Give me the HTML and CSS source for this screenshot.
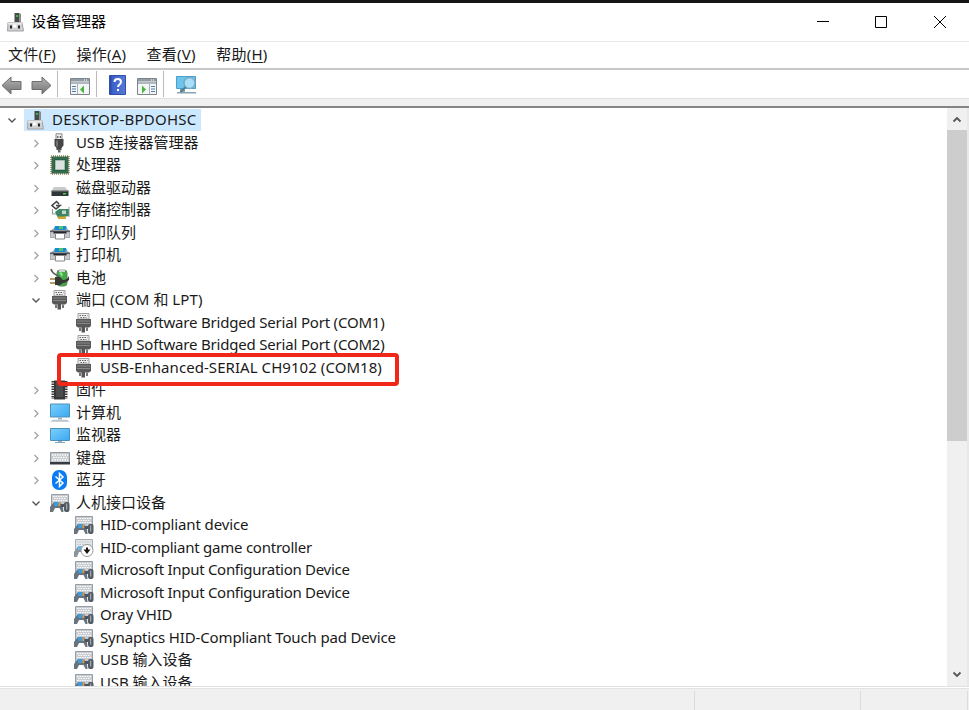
FILE: index.html
```html
<!DOCTYPE html>
<html lang="zh-CN">
<head>
<meta charset="utf-8">
<title>设备管理器</title>
<link rel="stylesheet" href="styles.css">
</head>
<body>
<svg class="defs" width="0" height="0">
  <defs>
    <linearGradient id="blue" x1="0" y1="0" x2="1" y2="1"><stop offset="0" stop-color="#7bd0fb"/><stop offset="1" stop-color="#3aa8f2"/></linearGradient>
    <linearGradient id="grey" x1="0" y1="0" x2="0" y2="1"><stop offset="0" stop-color="#b4b4b4"/><stop offset="1" stop-color="#747474"/></linearGradient>
    <linearGradient id="help" x1="0" y1="0" x2="1" y2="0"><stop offset="0" stop-color="#2442a0"/><stop offset=".2" stop-color="#3d62cb"/><stop offset="1" stop-color="#5778d8"/></linearGradient>
    <symbol id="pc" viewBox="0 0 20 20"><path d="M8.500 1h5v11h-5z" fill="#454b4b"/><path d="M13.500 1l1.500 1v10h-1.500z" fill="#888"/><path d="M10 3h2v2h-2z" fill="#42b548"/><path d="M2 10.500h14l1.500 8.500H1.500z" fill="#cfd0d2" stroke="#a2a3a5"/><path d="M2 10.500h14v2H2z" fill="#e9e9e9"/><path d="M4 13.500h2v3H4zm8 0h2v3h-2z" fill="#25282b"/><path d="M7 12.500h3.500v3H7z" fill="#fff"/></symbol>
    <symbol id="usb" viewBox="0 0 20 20"><path d="M6 .8h6v6H6z" fill="#eee" stroke="#888"/><path d="M7.200 3h1.200v2H7.200zm2.600 0H11v2H9.800z" fill="#555"/><path d="M4.500 6h9v6.500L11.500 15v2h-5v-2l-2-2.500z" fill="#464646"/><path d="M6 7.500h2v6H6z" fill="#727272"/><path d="M8 16h2.500v3.500H8z" fill="#666"/></symbol>
    <symbol id="cpu" viewBox="0 0 20 20"><path d="M1 1h18v18H1z" fill="none" stroke="#9b8446" stroke-width="1.500" stroke-dasharray="1 1"/><path d="M1.500 1.500h17v17h-17z" fill="#286047"/><path d="M3 3h14v14H3z" fill="none" stroke="#46765a"/><path d="M5.500 5.500h9v9h-9z" fill="#dce2df" stroke="#a9bdb1"/></symbol>
    <symbol id="disk" viewBox="0 0 20 20"><path d="M4 9h11l3.500 4h-17z" fill="#c9caca"/><path d="M1.500 12.800h17V18h-17z" fill="#303535"/><path d="M1.500 13h17" stroke="#727878"/><path d="M13 15h3v1.500h-3z" fill="#43d057"/></symbol>
    <symbol id="storage" viewBox="0 0 20 20"><path d="M9 4 6.500 1.500 2 5.500 6 9l4-3.500H6" fill="none" stroke="#454545" stroke-width="1.600"/><path d="M2.500 9v5h6" fill="none" stroke="#999" stroke-width="1.200"/><path d="M5 12l4-3h10v7l-11 2z" fill="#3c8665"/><path d="M12 10.500h4v3.500h-4z" fill="#c5d7cd"/><path d="M8 16.500h8V19H8z" fill="#d4a52f"/><path d="M19 7v10" stroke="#8c9991"/></symbol>
    <symbol id="printer" viewBox="0 0 20 20"><path d="M5 3h11l1.500 4h-14z" fill="#188bd5"/><path d="M9 3h4v3H9z" fill="#50c66a"/><path d="M3 5.500h1.500v2h11v-2H17l3 3V15H0V8.500z" fill="#a7acb0"/><path d="M0 7.500h20v1.500H0z" fill="#555d63"/><path d="M1 9.500h18V14H1z" fill="#c4c8cb"/><path d="M3.500 8.500h13v2h-13z" fill="#24282c"/><path d="M5.500 10.500h9v5.500h-9z" fill="#fff" stroke="#888"/></symbol>
    <symbol id="battery" viewBox="0 0 20 20"><rect x="7" y="2" width="10" height="16" rx="3" fill="#43aa48" stroke="#5d8560"/><path d="M9 1h6v3H9z" fill="#ccd1cd"/><path d="M9 5c2-2 5 0 3 4" fill="#8fe18b"/><path d="M1 1c1 5 5 5 8 8" fill="none" stroke="#5a5a5a" stroke-width="1.500"/><path d="M5 9h5l3 3c3 0 5-2 6-4v4c-2 2-4 3-6 3l-3 2H5z" fill="#353a35"/><path d="M0 11h5M0 15h5" stroke="#9b8033" stroke-width="1.600"/></symbol>
    <symbol id="port" viewBox="0 0 20 20"><path d="M4 .500h11V6H4z" fill="#f0f0f0" stroke="#a0a0a0"/><path d="M5.500 2.500h8M6.500 4.500h6" stroke="#626262" stroke-dasharray="1.500 1"/><path d="M2 6h15v7l-2 1.500H4L2 13z" fill="#595959"/><path d="M3 8h13M3 10.500h13" stroke="#888"/><path d="M5 14.500h2V18H5zm7 0h2V18h-2z" fill="#777"/><path d="M7.500 14h3.500v5.500H7.500z" fill="#565656"/></symbol>
    <symbol id="firmware" viewBox="0 0 20 20"><path d="M3 1v18M16 1v18" stroke="#383838" stroke-width="3" stroke-dasharray="1.500 1"/><path d="M4 .500h11v19H4z" fill="#383838"/><path d="M6 2h7v15H6z" fill="#4c4c4c"/></symbol>
    <symbol id="computer" viewBox="0 0 20 20"><path d="M.500 1h19v13H.500z" fill="url(#blue)" stroke="#4c91ba"/><path d="M8 14.500h4v2H8z" fill="#9eb0bb"/><path d="M3 16.800h14l3 2H0z" fill="#b9c6ce"/></symbol>
    <symbol id="monitor" viewBox="0 0 20 20"><path d="M.500 3.500h19v12H.500z" fill="url(#blue)" stroke="#4c91ba"/><path d="M8 16h4v1H8z" fill="#aab"/><path d="M5 17.500h10" stroke="#84a8b8"/></symbol>
    <symbol id="keyboard" viewBox="0 0 20 20"><path d="M.500 4.500h19v11H.500z" fill="#c3c9cc" stroke="#92999f"/><path d="M2 7h16M3 9.500h14M2 12h16" stroke="#fff" stroke-width="1.300" stroke-dasharray="1.500 1"/><path d="M0 14h20v2.500H0z" fill="#353b40"/></symbol>
    <symbol id="bluetooth" viewBox="0 0 20 20"><rect x="2" y="0" width="15" height="20" rx="7" fill="#087cf0"/><path d="M5.500 6.500 13 13l-3.500 3.500v-13L13 7l-7.500 6.500" fill="none" stroke="#fff" stroke-width="1.500"/></symbol>
    <symbol id="hid" viewBox="0 0 20 20"><path d="M1.500 1.500h17V13h-17z" fill="#c8ccd0" stroke="#989ea5"/><path d="M3 3.500h14M4 5.500h12M3 7.500h14" stroke="#fff" stroke-dasharray="1.500 1"/><path d="M0 13.500h20V20H0z" fill="#fff"/><path d="M3.500 9.500h7l2.500 4 .5 5.500h-2L9.500 15H5l-2 4H0v-5z" fill="#68737e"/><path d="M4 9h4.500v4H4z" fill="#3d9bda"/><path d="M8.500 10h2v3h-2z" fill="#e49b48"/><path d="M10.500 11h4v3h-4z" fill="#4c5660"/><rect x="14" y="9" width="5.500" height="10" rx="2" fill="#525c66"/><path d="M16.700 10.500v6" stroke="#b7bcc1"/></symbol>
    <symbol id="game" viewBox="0 0 20 20"><path d="M1.500 1.500h17V13h-17z" fill="#e3e6e8" stroke="#a7adb2"/><path d="M3 4h14M3 6.500h14" stroke="#c0c5c9" stroke-dasharray="1.500 1"/><path d="M3.500 9h6v5H5l-2 5H0v-5z" fill="#8b959d"/><path d="M4 8h4v4H4z" fill="#68b7e8"/><circle cx="13" cy="12.500" r="6" fill="#fff" stroke="#999"/><path d="M12 9.500h2v2h2.500L13 16l-3.500-4.500H12z" fill="#161616"/></symbol>
    <symbol id="down" viewBox="0 0 10 10"><path d="m1.500 3.500 3.500 3.500L8.500 3.500" fill="none" stroke="#555" stroke-width="1.400"/></symbol>
    <symbol id="right" viewBox="0 0 10 10"><path d="m3.500 2 3.500 3.500L3.500 9" fill="none" stroke="#a2a2a2" stroke-width="1.300"/></symbol>
    <symbol id="arrow" viewBox="0 0 22 20"><path d="M1 9.500 10 1v4.500h10v8H10V18z" fill="url(#grey)" stroke="#6e6e6e"/></symbol>
    <symbol id="panel" viewBox="0 0 20 17"><path d="M.500.500h19v16H.500z" fill="#f4f5f6" stroke="#7d858c"/><path d="M1 1h18v2.500H1z" fill="#929ba3"/><path d="M14 2h4" stroke="#fff" stroke-dasharray="1 1"/><path d="M1 5h18" stroke="#b2b9be" stroke-width="2"/></symbol>
  </defs>
</svg>
<main class="window">
  <header class="title">
    <svg class="icon"><use href="#pc"/></svg><h1>设备管理器</h1>
    <div class="controls">
      <svg width="12" height="12" viewBox="0 0 12 12"><path d="M0 5.500h12"/></svg>
      <svg width="12" height="12" viewBox="0 0 12 12"><path d="M.5.500h11v11H.5z"/></svg>
      <svg width="12" height="12" viewBox="0 0 12 12"><path d="m0 0 12 12M12 0 0 12"/></svg>
    </div>
  </header>
  <nav class="menu"><span>文件(<u>F</u>)</span><span>操作(<u>A</u>)</span><span>查看(<u>V</u>)</span><span>帮助(<u>H</u>)</span></nav>
  <div class="toolbar">
    <svg class="arrow" width="22" height="20"><use href="#arrow"/></svg>
    <svg class="arrow forward" width="22" height="20"><use href="#arrow"/></svg>
    <i class="sep first"></i>
    <svg class="panel p1" width="20" height="17" viewBox="0 0 20 17"><use href="#panel"/><path d="M7.500 6v10" stroke="#aab1b7"/><path d="M2 8.500h4M2 11h4M2 13.500h4" stroke="#4b7fae"/><path d="m14 7.500-4 4 4 4z" fill="#4bb53e"/></svg>
    <i class="sep second"></i>
    <svg class="help" width="17" height="21" viewBox="0 0 17 21"><path d="M.5.500h16v19H.5z" fill="url(#help)" stroke="#2f4fa8"/><path d="M5.500 7c0-4 6.500-4 6.500 0 0 2.500-3 2.500-3 5" fill="none" stroke="#fff" stroke-width="2"/><path d="M8 14h2v2H8z" fill="#fff"/></svg>
    <svg class="panel p2" width="20" height="17" viewBox="0 0 20 17"><use href="#panel"/><path d="M12.500 6v10" stroke="#aab1b7"/><path d="M14 8.500h4M14 11h4M14 13.500h4" stroke="#4b7fae"/><path d="m5 7.500 4 4-4 4z" fill="#4bb53e"/></svg>
    <i class="sep third"></i>
    <svg class="scan" width="21" height="20" viewBox="0 0 21 20"><path d="M.5 1.500h19v12H.5z" fill="#6bc5ef" stroke="#4b9fc8"/><path d="M4 14h5v3h11v1.500H1V17h3z" fill="#86a5b4"/><circle cx="13.500" cy="8" r="5.500" fill="#a7dff8" stroke="#78aabe" stroke-width="1.400"/><path d="m9.500 12-5 5" stroke="#527e94" stroke-width="2.200"/></svg>
  </div>
  <div class="gap"></div>
  <section class="content">
    <div class="tree">
      <div class="row root"><svg class="chev"><use href="#down"/></svg><div class="selected"><svg class="icon"><use href="#pc"/></svg><b class="host">DESKTOP-BPDOHSC</b></div></div>
      <div class="row group"><svg class="chev"><use href="#right"/></svg><svg class="icon"><use href="#usb"/></svg><p><b class="usb">USB</b> 连接器管理器</p></div>
      <div class="row group"><svg class="chev"><use href="#right"/></svg><svg class="icon"><use href="#cpu"/></svg><p>处理器</p></div>
      <div class="row group"><svg class="chev"><use href="#right"/></svg><svg class="icon"><use href="#disk"/></svg><p>磁盘驱动器</p></div>
      <div class="row group"><svg class="chev"><use href="#right"/></svg><svg class="icon"><use href="#storage"/></svg><p>存储控制器</p></div>
      <div class="row group"><svg class="chev"><use href="#right"/></svg><svg class="icon"><use href="#printer"/></svg><p>打印队列</p></div>
      <div class="row group"><svg class="chev"><use href="#right"/></svg><svg class="icon"><use href="#printer"/></svg><p>打印机</p></div>
      <div class="row group"><svg class="chev"><use href="#right"/></svg><svg class="icon"><use href="#battery"/></svg><p>电池</p></div>
      <div class="row group"><svg class="chev"><use href="#down"/></svg><svg class="icon"><use href="#port"/></svg><p>端口 <b class="com">(COM</b> 和 <b class="com">LPT)</b></p></div>
      <div class="row device"><svg class="icon"><use href="#port"/></svg><p><b class="hhd">HHD Software Bridged Serial Port (COM1)</b></p></div>
      <div class="row device"><svg class="icon"><use href="#port"/></svg><p><b class="hhd">HHD Software Bridged Serial Port (COM2)</b></p></div>
      <div class="row device"><svg class="icon"><use href="#port"/></svg><p><b class="serial">USB-Enhanced-SERIAL CH9102 (COM18)</b></p></div>
      <div class="row group"><svg class="chev"><use href="#right"/></svg><svg class="icon"><use href="#firmware"/></svg><p>固件</p></div>
      <div class="row group"><svg class="chev"><use href="#right"/></svg><svg class="icon"><use href="#computer"/></svg><p>计算机</p></div>
      <div class="row group"><svg class="chev"><use href="#right"/></svg><svg class="icon"><use href="#monitor"/></svg><p>监视器</p></div>
      <div class="row group"><svg class="chev"><use href="#right"/></svg><svg class="icon"><use href="#keyboard"/></svg><p>键盘</p></div>
      <div class="row group"><svg class="chev"><use href="#right"/></svg><svg class="icon"><use href="#bluetooth"/></svg><p>蓝牙</p></div>
      <div class="row group"><svg class="chev"><use href="#down"/></svg><svg class="icon"><use href="#hid"/></svg><p>人机接口设备</p></div>
      <div class="row device"><svg class="icon"><use href="#hid"/></svg><p><b class="hd">HID-compliant device</b></p></div>
      <div class="row device"><svg class="icon"><use href="#game"/></svg><p><b class="gc">HID-compliant game controller</b></p></div>
      <div class="row device"><svg class="icon"><use href="#hid"/></svg><p><b class="ms">Microsoft Input Configuration Device</b></p></div>
      <div class="row device"><svg class="icon"><use href="#hid"/></svg><p><b class="ms">Microsoft Input Configuration Device</b></p></div>
      <div class="row device"><svg class="icon"><use href="#hid"/></svg><p><b class="oray">Oray VHID</b></p></div>
      <div class="row device"><svg class="icon"><use href="#hid"/></svg><p><b class="syn">Synaptics HID-Compliant Touch pad Device</b></p></div>
      <div class="row device"><svg class="icon"><use href="#hid"/></svg><p><b class="usb">USB</b> 输入设备</p></div>
      <div class="row device"><svg class="icon"><use href="#hid"/></svg><p><b class="usb">USB</b> 输入设备</p></div>
      <div class="callout"></div>
    </div>
    <div class="scroll">
      <svg width="10" height="10" viewBox="0 0 10 10"><path d="M1.500 7.500 5 4l3.500 3.500"/></svg>
      <div class="thumb"></div>
      <svg width="10" height="10" viewBox="0 0 10 10"><path d="M1.500 2.500 5 6l3.500-3.500"/></svg>
    </div>
  </section>
  <footer class="status"><div></div><div></div><div></div></footer>
</main>
</body>
</html>
```
FILE: styles.css
```css
* { box-sizing: border-box; }
body { margin: 0; overflow: hidden; background: #fff; color: #1a1a1a; font: 15px/22px "Noto Sans", "Noto Sans CJK SC", sans-serif; }
.defs { position: absolute; }
.window { display: flex; flex-direction: column; height: 710px; border-top: 3px solid #151515; }
.title { display: flex; align-items: center; height: 39px; flex: none; padding-left: 6px; border-bottom: 1px solid #e8e8e8; }
h1 { margin: 0 0 2px 5px; font-size: 15px; font-weight: 400; color: #000; font-family: "Noto Sans CJK SC", sans-serif; }
.title .icon { margin-bottom: 1px; }
.icon { width: 20px; height: 20px; flex: none; }
.controls { display: flex; gap: 47px; margin-left: auto; padding-right: 23px; }
.controls svg:first-child { margin-right: -1px; }
.controls path { fill: none; stroke: #000; stroke-width: 1; }
.menu { display: flex; gap: 20.3px; height: 28px; flex: none; align-items: center; padding: 0 0 2px 8px; border-bottom: 2px solid #c8c8c8; letter-spacing: .25px; }
.menu u { text-underline-offset: 2px; text-decoration-thickness: 1px; }
.toolbar { display: flex; align-items: center; height: 28px; flex: none; padding-left: 1px; }
.toolbar svg { flex: none; }
.toolbar .arrow { margin-top: 3px; }
.forward { transform: scaleX(-1); margin-left: 7px; }
.sep { width: 1px; height: 26px; background: #bbb; }
.first { margin-left: 5px; }
.p1 { margin-left: 12px; }
.second { margin-left: 6px; }
.toolbar .help { margin: 2px 0 0 12px; }
.p2 { margin-left: 11px; }
.third { margin-left: 6px; }
.toolbar .scan { margin: 2px 0 0 12px; }
.panel { margin-top: 5px; }
.gap { height: 10px; flex: none; background: #f0f0f0; border-top: 1px solid #e0e0e0; border-bottom: 2px solid #858585; }
.content { display: flex; height: 578px; flex: none; }
.tree { position: relative; width: 947px; height: 578px; padding-top: .75px; overflow: hidden; }
.row { display: flex; align-items: center; height: 22.5px; white-space: nowrap; }
.row p { margin: 0 0 1.2px 6px; }
.row b { font-weight: 400; display: inline-block; letter-spacing: -.42px; }
.row .usb { letter-spacing: -.1px; }
.row .com { letter-spacing: .15px; }
.row .hhd { letter-spacing: -.19px; }
.row .serial { letter-spacing: .06px; }
.row .hd { letter-spacing: -.12px; }
.row .gc { letter-spacing: -.23px; }
.row .ms { letter-spacing: -.29px; }
.row .oray { letter-spacing: -.15px; }
.row .syn { letter-spacing: -.15px; }
.chev { width: 10px; height: 10px; flex: none; }
.root { padding-left: 7px; }
.selected { display: flex; align-items: center; width: 177px; height: 22px; margin-left: 7px; padding-left: 2px; background: #cce8ff; }
.selected .host { margin: 0 0 2px 6px; letter-spacing: .25px; }
.group { padding-left: 31px; }
.group .icon { margin-left: 9px; }
.device { padding-left: 74px; }
.callout { position: absolute; left: 57px; top: 245px; width: 342px; height: 33px; border: 4px solid #f12719; border-radius: 4px; }
.scroll { display: flex; flex-direction: column; align-items: center; width: 22px; background: #f0f0f0; border-right: 2px solid #e8e8e8; }
.scroll svg { margin: 6px 0; flex: none; }
.scroll path { fill: none; stroke: #555; stroke-width: 1.8; }
.thumb { width: 20px; height: 311px; background: #cdcdcd; margin-bottom: auto; }
.status { display: flex; flex: 1; background: #f0f0f0; border-top: 1px solid #e1e1e1; padding-top: 4px; box-shadow: inset 0 1px #fff, inset 0 2px #e4e4e4; }
.status div { border-right: 1px solid #dcdcdc; }
.status div:nth-child(1) { width: 695px; }
.status div:nth-child(2) { width: 166px; }
.status div:nth-child(3) { width: 107px; }
```
